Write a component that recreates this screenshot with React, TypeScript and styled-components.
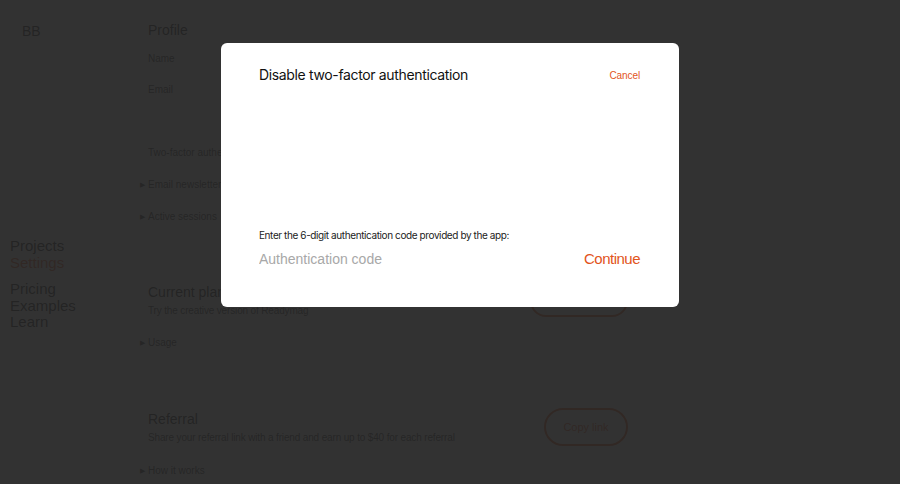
import React from "react";
import styled, { createGlobalStyle } from "styled-components";

const GlobalStyle = createGlobalStyle`
  html, body { margin: 0; padding: 0; background: #ffffff; }
  body { font-family: "Liberation Sans", Arial, sans-serif; color: #222; }
  * { box-sizing: border-box; }
`;

const ORANGE = "#e2541c";

const Page = styled.div`
  display: flex;
  width: 900px;
  min-height: 484px;
  background: #fff;
`;

const Sidebar = styled.aside`
  width: 148px;
  flex: none;
  display: flex;
  flex-direction: column;
  padding-top: 23px;
`;

const Logo = styled.div`
  padding-left: 22px;
  font-size: 14px;
  font-weight: 400;
  color: #111;
`;

const Nav = styled.nav`
  margin-top: 199px;
  padding-left: 10px;
  display: flex;
  flex-direction: column;
`;

const NavGroup = styled.div`
  display: flex;
  flex-direction: column;
  & + & { margin-top: 10px; }
`;

const NavLink = styled.a<{ $active?: boolean }>`
  font-size: 15px;
  line-height: 16.5px;
  color: ${(p) => (p.$active ? ORANGE : "#111")};
  text-decoration: none;
`;

const Main = styled.main`
  width: 480px;
  display: flex;
  flex-direction: column;
  padding-top: 21px;
`;

const Section = styled.section<{ $gap?: number }>`
  display: flex;
  flex-direction: column;
  margin-top: ${(p) => p.$gap ?? 0}px;
`;

const SectionHead = styled.div`
  display: flex;
  justify-content: space-between;
  align-items: center;
`;

const HeadText = styled.div`
  display: flex;
  flex-direction: column;
`;

const H2 = styled.h2`
  margin: 0;
  font-size: 14px;
  font-weight: 400;
  line-height: 18px;
  color: #111;
`;

const Sub = styled.p`
  margin: 3px 0 0;
  font-size: 10px;
  letter-spacing: -0.15px;
  line-height: 14px;
  color: #333;
`;

const FieldLabel = styled.div<{ $mt: number }>`
  margin-top: ${(p) => p.$mt}px;
  font-size: 10px;
  line-height: 14px;
  color: #333;
`;

const Disclosure = styled.div<{ $mt: number }>`
  margin-top: ${(p) => p.$mt}px;
  margin-left: -8px;
  display: flex;
  align-items: center;
  gap: 3px;
  font-size: 10px;
  line-height: 14px;
  color: #333;
`;

const Caret = styled.span`
  font-size: 7px;
`;

const PillButton = styled.button<{ $w: number; $h: number }>`
  width: ${(p) => p.$w}px;
  height: ${(p) => p.$h}px;
  border: 2px solid ${ORANGE};
  border-radius: 999px;
  background: #fff;
  color: ${ORANGE};
  font-family: inherit;
  font-size: 11px;
`;

const Overlay = styled.div`
  position: fixed;
  inset: 0;
  background: rgba(37, 37, 37, 0.94);
  display: flex;
  justify-content: center;
  align-items: flex-start;
  padding-top: 43px;
`;

const Modal = styled.div`
  width: 458px;
  height: 264px;
  background: #fff;
  border-radius: 6px;
  padding: 23px 39px 0 38px;
  display: flex;
  flex-direction: column;
`;

const ModalHeader = styled.div`
  display: flex;
  justify-content: space-between;
  align-items: center;
`;

const ModalTitle = styled.h1`
  margin: 0;
  font-family: Inter, "Liberation Sans", sans-serif;
  font-size: 14px;
  letter-spacing: -0.35px;
  font-weight: 400;
  line-height: 17px;
  color: #111;
`;

const TextButton = styled.button<{ $size: number; $track?: number; $nudge?: number }>`
  border: none;
  background: none;
  padding: 0;
  margin-top: ${(p) => p.$nudge ?? 0}px;
  font-family: "Liberation Sans", Arial, sans-serif;
  font-size: ${(p) => p.$size}px;
  letter-spacing: ${(p) => p.$track ?? 0}px;
  color: ${ORANGE};
  cursor: pointer;
`;

const Prompt = styled.p`
  margin: 146px 0 0;
  font-family: Inter, "Liberation Sans", sans-serif;
  font-size: 10px;
  letter-spacing: -0.4px;
  line-height: 12px;
  color: #222;
`;

const CodeRow = styled.div`
  margin-top: 9px;
  display: flex;
  justify-content: space-between;
  align-items: center;
`;

const CodeInput = styled.input`
  border: none;
  outline: none;
  padding: 0;
  width: 200px;
  font-family: "Liberation Sans", Arial, sans-serif;
  font-size: 14px;
  color: #111;
  &::placeholder { color: #a8a8a8; }
`;

export default function App() {
  return (
    <>
      <GlobalStyle />
      <Page>
        <Sidebar>
          <Logo>BB</Logo>
          <Nav>
            <NavGroup>
              <NavLink>Projects</NavLink>
              <NavLink $active>Settings</NavLink>
            </NavGroup>
            <NavGroup>
              <NavLink>Pricing</NavLink>
              <NavLink>Examples</NavLink>
              <NavLink>Learn</NavLink>
            </NavGroup>
          </Nav>
        </Sidebar>
        <Main>
          <Section>
            <H2>Profile</H2>
            <FieldLabel $mt={13}>Name</FieldLabel>
            <FieldLabel $mt={17}>Email</FieldLabel>
            <FieldLabel $mt={49}>Two-factor authentication</FieldLabel>
            <Disclosure $mt={18}><Caret>▶</Caret>Email newsletter</Disclosure>
            <Disclosure $mt={18}><Caret>▶</Caret>Active sessions</Disclosure>
          </Section>
          <Section $gap={59}>
            <SectionHead>
              <HeadText>
                <H2>Current plan</H2>
                <Sub>Try the creative version of Readymag</Sub>
              </HeadText>
              <PillButton $w={98} $h={32}>Upgrade</PillButton>
            </SectionHead>
            <Disclosure $mt={18}><Caret>▶</Caret>Usage</Disclosure>
          </Section>
          <Section $gap={58}>
            <SectionHead>
              <HeadText>
                <H2>Referral</H2>
                <Sub>Share your referral link with a friend and earn up to $40 for each referral</Sub>
              </HeadText>
              <PillButton $w={84} $h={38}>Copy link</PillButton>
            </SectionHead>
            <Disclosure $mt={18}><Caret>▶</Caret>How it works</Disclosure>
          </Section>
        </Main>
      </Page>
      <Overlay>
        <Modal>
          <ModalHeader>
            <ModalTitle>Disable two-factor authentication</ModalTitle>
            <TextButton $size={10} $track={-0.1} $nudge={2}>Cancel</TextButton>
          </ModalHeader>
          <Prompt>Enter the 6-digit authentication code provided by the app:</Prompt>
          <CodeRow>
            <CodeInput placeholder="Authentication code" />
            <TextButton $size={15} $track={-0.5}>Continue</TextButton>
          </CodeRow>
        </Modal>
      </Overlay>
    </>
  );
}
